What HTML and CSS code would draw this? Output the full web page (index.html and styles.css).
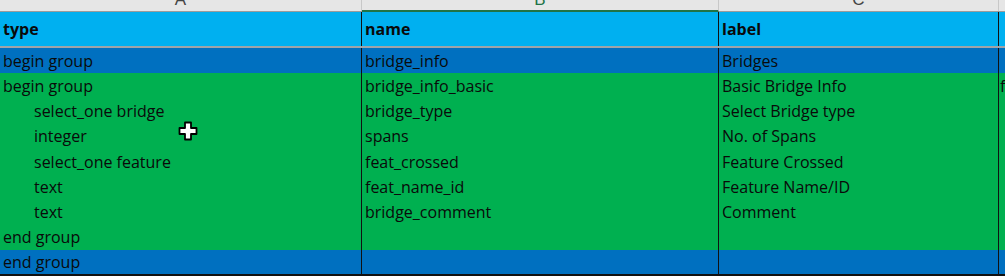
FILE: index.html
```html
<!DOCTYPE html>
<html>
<head>
<meta charset="utf-8">
<link rel="stylesheet" href="styles.css">
</head>
<body>
<div class="sheet">
  <div class="colbar">
    <div class="ch ca"><span>A</span></div>
    <div class="ch cb sel"><span>B</span></div>
    <div class="ch cc"><span>C</span></div>
    <div class="ch cd"></div>
  </div>
  <div class="row head">
    <div class="cell ca">type</div>
    <div class="cell cb">name</div>
    <div class="cell cc">label</div>
    <div class="cell cd"></div>
  </div>
  <div class="row blue">
    <div class="cell ca">begin group</div>
    <div class="cell cb">bridge_info</div>
    <div class="cell cc">Bridges</div>
    <div class="cell cd"></div>
  </div>
  <div class="row green">
    <div class="cell ca">begin group</div>
    <div class="cell cb">bridge_info_basic</div>
    <div class="cell cc">Basic Bridge Info</div>
    <div class="cell cd">f</div>
  </div>
  <div class="row green">
    <div class="cell ca ind">select_one bridge</div>
    <div class="cell cb">bridge_type</div>
    <div class="cell cc">Select Bridge type</div>
    <div class="cell cd"></div>
  </div>
  <div class="row green">
    <div class="cell ca ind">integer</div>
    <div class="cell cb">spans</div>
    <div class="cell cc">No. of Spans</div>
    <div class="cell cd"></div>
  </div>
  <div class="row green">
    <div class="cell ca ind">select_one feature</div>
    <div class="cell cb">feat_crossed</div>
    <div class="cell cc">Feature Crossed</div>
    <div class="cell cd"></div>
  </div>
  <div class="row green">
    <div class="cell ca ind">text</div>
    <div class="cell cb">feat_name_id</div>
    <div class="cell cc">Feature Name/ID</div>
    <div class="cell cd"></div>
  </div>
  <div class="row green">
    <div class="cell ca ind">text</div>
    <div class="cell cb">bridge_comment</div>
    <div class="cell cc">Comment</div>
    <div class="cell cd"></div>
  </div>
  <div class="row green">
    <div class="cell ca">end group</div>
    <div class="cell cb"></div>
    <div class="cell cc"></div>
    <div class="cell cd"></div>
  </div>
  <div class="row blue last">
    <div class="cell ca">end group</div>
    <div class="cell cb"></div>
    <div class="cell cc"></div>
    <div class="cell cd"></div>
  </div>
  <svg class="cursor" width="20" height="20" viewBox="0 0 20 20">
    <path d="M7 1.5h6v5.5h5.5v6h-5.5v5.5h-6v-5.5h-5.5v-6h5.5z" fill="#fff" stroke="#000" stroke-width="1.8" stroke-linejoin="round"/>
  </svg>
</div>
</body>
</html>
```
FILE: styles.css
```css
* { box-sizing: border-box; }
html, body { margin: 0; padding: 0; background: #fff; }
body {
  font-family: "Open Sans", "Noto Sans", sans-serif;
  font-size: 16px;
  color: #0a0a0a;
  width: 1005px;
  height: 277px;
  overflow: hidden;
}
.sheet {
  position: relative;
  display: flex;
  flex-direction: column;
  width: 1005px;
}
.colbar, .row { display: flex; }
.ca { width: 362px; }
.cb { width: 357px; }
.cc { width: 280px; }
.cd { flex: 1; }

.colbar {
  height: 12px;
  background: #e6e6e6;
  border-bottom: 1px solid #9b9b9b;
}
.ch {
  position: relative;
  overflow: hidden;
  text-align: center;
  color: #444;
  font-family: "Liberation Sans", sans-serif;
  font-size: 17px;
  line-height: 12px;
  border-right: 1px solid #c8c8c8;
}
.ch span { display: block; margin-top: -6px; }
.ch.sel { color: #217346; border-bottom: 2px solid #217346; margin-bottom: -1px; }
.ch.cd { border-right: none; }

.cell {
  border-right: 1px solid #111;
  padding-left: 3px;
  display: flex;
  align-items: center;
  white-space: nowrap;
  overflow: hidden;
}
.cell.cd { border-right: none; padding-left: 1px; }
.cell.ind { padding-left: 34px; }

.head {
  height: 36px;
  background: #00b0f0;
  font-weight: bold;
  border-bottom: 2px solid #9fa4a8;
}
.head .cell { align-items: flex-end; padding-bottom: 6px; }
.blue { height: 25px; background: #0070c0; }
.green { height: 25.3px; background: #00b050; }
.last { height: 26px; border-bottom: 2px solid #111; }

.cursor {
  position: absolute;
  left: 178px;
  top: 121px;
}
```
